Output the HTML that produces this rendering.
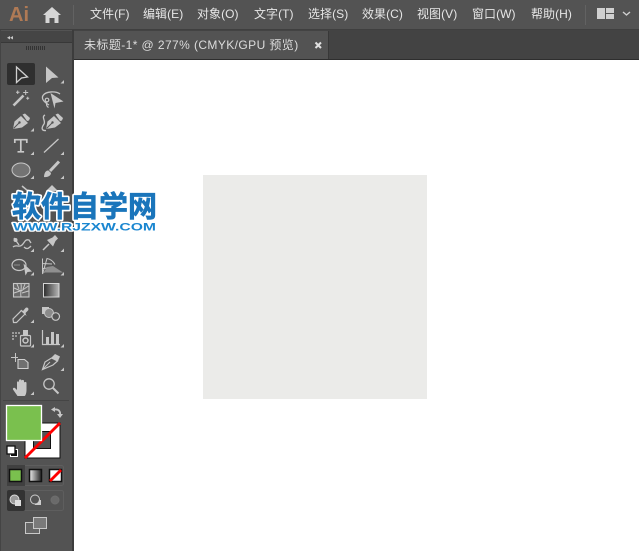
<!DOCTYPE html>
<html><head><meta charset="utf-8">
<style>
html,body{margin:0;padding:0;background:#fff}
#p{position:relative;width:639px;height:551px;overflow:hidden;background:#fff;font-family:"Liberation Sans","Noto Sans CJK SC",sans-serif}
.a{position:absolute}
.m{position:absolute;top:6px;font-size:12px;line-height:17px;color:#e6e6e6;white-space:nowrap;letter-spacing:.05px}
</style></head><body><div id="p">
<div class="a" style="left:0;top:0;width:639px;height:30px;background:#535353;border-bottom:1px solid #3f3f3f;box-sizing:border-box"></div>
<div class="a" style="left:73px;top:30px;width:566px;height:30px;background:#434343;border-bottom:1px solid #2e2e2e;box-sizing:border-box"></div>
<div class="a" style="left:74px;top:31px;width:254px;height:28px;background:#535353;border-right:1px solid #383838"></div>
<div class="a" style="left:0;top:30px;width:72px;height:521px;background:#535353"></div>
<div class="a" style="left:1px;top:31px;width:71px;height:11px;background:#454545;border-bottom:1px solid #383838"></div>
<div class="a" style="left:0;top:30px;width:1px;height:521px;background:#444"></div>
<div class="a" style="left:72px;top:30px;width:2px;height:521px;background:#3c3c3c"></div>
<div class="a" style="left:203px;top:175px;width:224px;height:224px;background:#ebebe9"></div>

<div class="a" style="left:9px;top:1px;font:bold 20px/28px 'Liberation Sans',sans-serif;color:#b07a55">Ai</div>
<svg class="a" style="left:0;top:0" width="639" height="30">
<path d="M43 15 L52 7 L61 15 L58.500 15 L58.500 23 L54.500 23 L54.500 18 L49.500 18 L49.500 23 L45.500 23 L45.500 15Z" fill="#d6d6d6"/>
<rect x="73" y="5" width="1" height="20" fill="#626262"/>
<rect x="585" y="5" width="1" height="20" fill="#626262"/>
<rect x="597" y="8" width="8" height="11" fill="#d0d0d0"/>
<rect x="606" y="8" width="8" height="5" fill="#d0d0d0"/>
<rect x="606" y="14" width="8" height="5" fill="#d0d0d0"/>
<path d="M623 12 L626.500 15 L630 12" fill="none" stroke="#d0d0d0" stroke-width="1.400"/>
</svg>
<div class="m" style="left:90px">文件(F)</div>
<div class="m" style="left:143px">编辑(E)</div>
<div class="m" style="left:197px">对象(O)</div>
<div class="m" style="left:254px">文字(T)</div>
<div class="m" style="left:308px">选择(S)</div>
<div class="m" style="left:362px">效果(C)</div>
<div class="m" style="left:417px">视图(V)</div>
<div class="m" style="left:472px">窗口(W)</div>
<div class="m" style="left:531px">帮助(H)</div>
<div class="m" style="left:84px;top:37px;font-size:12px;color:#dcdcdc;letter-spacing:.41px">未标题-1* @ 277% (CMYK/GPU 预览)</div>
<svg class="a" style="left:314px;top:41px" width="9" height="9"><path d="M1.500 1.500L7 7M7 1.500L1.500 7" stroke="#e0e0e0" stroke-width="2"/></svg>

<svg class="a" style="left:0;top:0" width="74" height="551">
<path d="M10 36L7 37.800L10 39.500ZM13 36L10 37.800L13 39.500Z" fill="#c8c8c8"/>
<g fill="#333"><rect x="26" y="46" width="1" height="4"/><rect x="28" y="46" width="1" height="4"/><rect x="30" y="46" width="1" height="4"/><rect x="32" y="46" width="1" height="4"/><rect x="34" y="46" width="1" height="4"/><rect x="36" y="46" width="1" height="4"/><rect x="38" y="46" width="1" height="4"/><rect x="40" y="46" width="1" height="4"/><rect x="42" y="46" width="1" height="4"/><rect x="44" y="46" width="1" height="4"/></g>
<rect x="7" y="63" width="28" height="22" rx="2" fill="#2f2f2f"/>
<!-- corner triangles -->
<path fill="#c6c6c6" d="M64 83.500v-3.500l-3.500 3.500zM34 131.500v-3.500l-3.500 3.500zM34 155v-3.500l-3.500 3.500zM64 155v-3.500l-3.500 3.500zM34 179v-3.500l-3.500 3.500zM64 179v-3.500l-3.500 3.500zM34 252v-3.500l-3.500 3.500zM64 252v-3.500l-3.500 3.500zM34 275.500v-3.500l-3.500 3.500zM64 275.500v-3.500l-3.500 3.500zM34 323v-3.500l-3.500 3.500zM34 347.500v-3.500l-3.500 3.500zM64 347.500v-3.500l-3.500 3.500zM64 371v-3.500l-3.500 3.500zM34 395v-3.500l-3.500 3.500z"/>
<!-- selection -->
<path d="M16.500 67L27.500 77L21.500 78L16.500 82.500Z" fill="none" stroke="#d0d0d0" stroke-width="1.300"/>
<path d="M46 66.500L58.500 77.500L52 78L46 83Z" fill="#c6c6c6"/>
<!-- wand -->
<path d="M13.500 105.500L23.500 95.500" stroke="#c6c6c6" stroke-width="2.600" fill="none"/>
<path d="M25.700 90v5M23.200 92.500h5M17.700 90.500v3.500M16 92.300h3.500M27.700 96.800v3M26.200 98.300h3" stroke="#c6c6c6" stroke-width="1" fill="none"/>
<!-- lasso -->
<path d="M49 105C44 102 41 99 43 95.500C46 91 56 91 60 94" fill="none" stroke="#c6c6c6" stroke-width="1.300"/>
<circle cx="47" cy="100" r="1.800" fill="none" stroke="#c6c6c6" stroke-width="1.200"/>
<path d="M47 102C46 104 46.500 106.500 48.500 107.500" fill="none" stroke="#c6c6c6" stroke-width="1.200"/>
<path d="M50.500 93L63.500 101.500L55.500 103L54.500 108.500Z" fill="#c6c6c6"/>
<!-- pen -->
<path d="M13 129L14.500 121.500L21 116L28 123L22 127.500Z" fill="#c6c6c6"/>
<path d="M22.500 114.500L25 113.500L30 118L29 120.500L27 121Z" fill="#c6c6c6"/>
<path d="M13.500 128.500L19 123" stroke="#535353" stroke-width="1" fill="none"/><circle cx="19.500" cy="122.500" r="1.200" fill="#535353"/>
<!-- curvature -->
<path d="M46 129L47.500 121.500L54 116L61 123L55 127.500Z" fill="#c6c6c6"/>
<path d="M55.500 114.500L58 113.500L63 118L62 120.500L60 121Z" fill="#c6c6c6"/>
<path d="M46.500 128.500L52 123" stroke="#535353" stroke-width="1" fill="none"/><circle cx="52.500" cy="122.500" r="1.200" fill="#535353"/>
<path d="M45 115C41 117 46 121 44 124C41.500 127.500 41 131 46 130.500" fill="none" stroke="#c6c6c6" stroke-width="1.300"/>
<!-- T -->
<path d="M14.800 143v-3.300h12v3.300M20.800 139.700v12M17.500 151.800h6.600" fill="none" stroke="#c9c9c9" stroke-width="1.700"/>
<!-- line -->
<path d="M44 152.500L58.500 139" stroke="#c6c6c6" stroke-width="1.300"/>
<!-- ellipse -->
<ellipse cx="21" cy="170" rx="9" ry="7" fill="#737373" stroke="#c6c6c6" stroke-width="1"/>
<!-- brush -->
<path d="M44 177C44 173 46 170 48.500 170.500L51 173C51 176 47 177.500 44 177Z" fill="#c6c6c6"/>
<path d="M50 171L59 161.500" stroke="#c6c6c6" stroke-width="3" fill="none"/>
<!-- hidden row hints -->
<path d="M22 186L28 191" stroke="#c6c6c6" stroke-width="1.500" fill="none"/><path d="M46 191L52 185L58 191Z" fill="#c6c6c6"/>
<!-- puppet warp -->
<path d="M13 247C16 244 19 248 22 245C25 242 25 239 29 240L31 243M14 238L19 245M24 247C27 250 29 248 31 246" fill="none" stroke="#c6c6c6" stroke-width="1.300"/><circle cx="15.500" cy="240" r="2" fill="#c6c6c6"/>
<!-- pin -->
<path d="M43 250L49 244" stroke="#c6c6c6" stroke-width="1.500"/><path d="M47 240L52.500 237.500L55 235L58 238.500L55.500 241L53 246.500Z" fill="#c6c6c6"/>
<!-- shape builder -->
<ellipse cx="19" cy="265" rx="7" ry="5.500" fill="none" stroke="#c6c6c6" stroke-width="1.200"/>
<path d="M14.500 265h6" stroke="#c6c6c6" stroke-dasharray="1 1" stroke-width="1"/>
<path d="M23.500 263.500L32 271.500L27.500 272L25.500 275.500Z" fill="#c6c6c6"/>
<!-- perspective -->
<path d="M42.500 258.500V274L47 258.500C50 259 53 261 55 264.500M42.500 263.500L52 264M42.500 268.500L48 268" fill="none" stroke="#c6c6c6" stroke-width="1"/>
<path d="M47 267L53 266L63 272.500H45L42.500 274Z" fill="#8f8f8f"/>
<!-- mesh -->
<rect x="13.500" y="283.500" width="15.500" height="13.500" fill="#6a6a6a" stroke="#c6c6c6" stroke-width="1.100"/>
<path d="M21 284C22 288 20 292 21 297M14 288L21 291L28.500 286M14 293L20 291M22 293L28.500 291M17 284L19 289M25 284L23 289" fill="none" stroke="#c6c6c6" stroke-width="1"/>
<!-- eyedropper -->
<path d="M13.500 322.500L13 319L21.500 310.500L25 314L16.500 322.500Z" fill="none" stroke="#c6c6c6" stroke-width="1.200"/>
<path d="M20 310L23 311L25.500 308C27 306.500 29.500 308.500 28 310.500L25.500 313L26.500 316Z" fill="#c6c6c6"/>
<!-- blend -->
<rect x="42" y="307" width="7" height="7" fill="#c6c6c6"/>
<circle cx="49" cy="313" r="4.500" fill="#8a8a8a" stroke="#c6c6c6"/>
<circle cx="55.700" cy="316.500" r="3.800" fill="#535353" stroke="#c6c6c6" stroke-width="1.200"/>
<!-- sprayer -->
<g fill="#9a9a9a"><rect x="12" y="332" width="2" height="2"/><rect x="15" y="332" width="2" height="2"/><rect x="18" y="332" width="2" height="2"/><rect x="12" y="335" width="2" height="2"/><rect x="15" y="335" width="2" height="2"/><rect x="12" y="338" width="2" height="2"/></g>
<rect x="20.500" y="335.500" width="10" height="10.500" rx="1" fill="none" stroke="#c6c6c6" stroke-width="1.200"/>
<rect x="23" y="330" width="5" height="5" fill="#c6c6c6"/>
<circle cx="25.500" cy="340.500" r="2.500" fill="none" stroke="#c6c6c6" stroke-width="1.500"/>
<!-- chart -->
<path d="M42.500 330V344.500H60" fill="none" stroke="#c6c6c6" stroke-width="1.200"/>
<rect x="46" y="337" width="3" height="7" fill="#c6c6c6"/><rect x="51" y="332" width="3" height="12" fill="#c6c6c6"/><rect x="56" y="334" width="3" height="10" fill="#c6c6c6"/>
<!-- artboard -->
<path d="M15.500 353v9M11 357.500h7" fill="none" stroke="#c6c6c6" stroke-width="1"/>
<path d="M18 359.500H24.500L28 362.500V368.500H18Z" fill="#707070" stroke="#d0d0d0" stroke-width="1.100"/>
<!-- slice -->
<path d="M42.500 369.500L45 362L51.500 358L57.500 361L53 365Z" fill="none" stroke="#c6c6c6" stroke-width="1.200"/>
<path d="M43 369L50 362" stroke="#c6c6c6" stroke-width="1"/>
<path d="M51 358L55 354L60 356.500L58 361Z" fill="#c6c6c6"/>
<!-- hand -->
<path d="M17.500 396L13 389.500C12.500 388 14 387 15.500 388.500L17 390V382.500C17 381 19 381 19 382.500V387V380.500C19 379 21.500 379 21.500 380.500V387V381C21.500 379.500 24 379.500 24 381V387.500V383C24 381.500 26.500 381.500 26.500 383V390C26.500 393 25.500 396 24.500 396Z" fill="#c9c9c9"/>
<!-- zoom -->
<circle cx="49" cy="384" r="5.200" fill="none" stroke="#c6c6c6" stroke-width="1.300"/><path d="M53 388L58.500 393.500" stroke="#c6c6c6" stroke-width="2"/>
<defs><linearGradient id="g1" x1="0" x2="1"><stop offset="0" stop-color="#2c2c2c"/><stop offset="1" stop-color="#b8b8b8"/></linearGradient>
<linearGradient id="g2" x1="0" x2="1"><stop offset="0" stop-color="#eee"/><stop offset="1" stop-color="#222"/></linearGradient></defs>
<rect x="43.500" y="283.500" width="15.500" height="13.500" fill="url(#g1)" stroke="#d5d5d5"/>
<rect x="3" y="400" width="66" height="1" fill="#454545"/>
<!-- swap -->
<path d="M51 409.500L55 407V412Z" fill="#c6c6c6"/><path d="M55 409.500C59 409 60.500 412 60 414.500" fill="none" stroke="#c6c6c6" stroke-width="1.800"/><path d="M57 414L60 418L63 414Z" fill="#c6c6c6"/>
<!-- stroke box -->
<rect x="25" y="423" width="35" height="35" fill="#fff" stroke="#111" stroke-width="1"/>
<rect x="33.500" y="431.500" width="17" height="17" fill="#535353" stroke="#111"/>
<path d="M25 458L60 423" stroke="#f00" stroke-width="2.800"/>
<!-- fill -->
<rect x="6.500" y="405.500" width="35" height="35" fill="#7ac04e" stroke="#fff" stroke-width="1.300"/>
<!-- default -->
<rect x="10.500" y="449.500" width="7" height="7" fill="#111" stroke="#fff"/>
<rect x="7" y="446" width="8" height="8" fill="#fff" stroke="#111" stroke-width="1.300"/>
<!-- mode -->
<rect x="7.500" y="465.500" width="56" height="20" rx="2" fill="none" stroke="#5e5e5e"/>
<rect x="7" y="465" width="18" height="21" fill="#404040"/>
<rect x="9.500" y="469.500" width="12" height="12" fill="#7ac04e" stroke="#111" stroke-width="1.500"/>
<rect x="29.500" y="469.500" width="12" height="12" fill="url(#g2)" stroke="#111" stroke-width="1.500"/>
<rect x="49.500" y="469.500" width="12" height="12" fill="#fff" stroke="#111" stroke-width="1.500"/>
<path d="M50 481L61 470" stroke="#f00" stroke-width="2.800"/>
<!-- draw modes -->
<rect x="7.500" y="490.500" width="56" height="20" rx="2" fill="none" stroke="#5e5e5e"/>
<rect x="7" y="490" width="18" height="21" rx="2" fill="#333"/>
<circle cx="14.500" cy="499.500" r="4.500" fill="#9a9a9a" stroke="#ddd"/><rect x="15" y="500" width="6" height="6" fill="#ddd"/>
<circle cx="35" cy="499.500" r="4.500" fill="#535353" stroke="#ccc"/><path d="M35 505h6v-5h-2a4 4 0 0 1-4 4z" fill="#ccc"/>
<circle cx="55" cy="500" r="4" fill="#6a6a6a" stroke="#6e6e6e"/>
<!-- screen mode -->
<rect x="25.500" y="522.500" width="14" height="11" fill="#666" stroke="#c8c8c8"/>
<rect x="33.500" y="517.500" width="13" height="11" fill="#7a7a7a" stroke="#c8c8c8"/>
</svg>

<svg class="a" style="left:0;top:180px" width="170" height="60">
<text x="12" y="36.500" font-family="'Noto Sans CJK SC','WenQuanYi Zen Hei',sans-serif" font-weight="700" font-size="29" fill="#1a75bb" stroke="#fff" stroke-width="4" stroke-linejoin="round" textLength="145" lengthAdjust="spacingAndGlyphs">软件自学网</text>
<text x="12" y="36.500" font-family="'Noto Sans CJK SC','WenQuanYi Zen Hei',sans-serif" font-weight="700" font-size="29" fill="#1a75bb" stroke="#1a75bb" stroke-width=".7" textLength="145" lengthAdjust="spacingAndGlyphs">软件自学网</text>
<text x="13" y="50.500" font-family="'Liberation Sans',sans-serif" font-weight="700" font-size="11" fill="#1a86d0" stroke="#fff" stroke-width="2.500" stroke-linejoin="round" paint-order="stroke" textLength="143" lengthAdjust="spacingAndGlyphs">WWW.RJZXW.COM</text>
</svg>
</div></body></html>
